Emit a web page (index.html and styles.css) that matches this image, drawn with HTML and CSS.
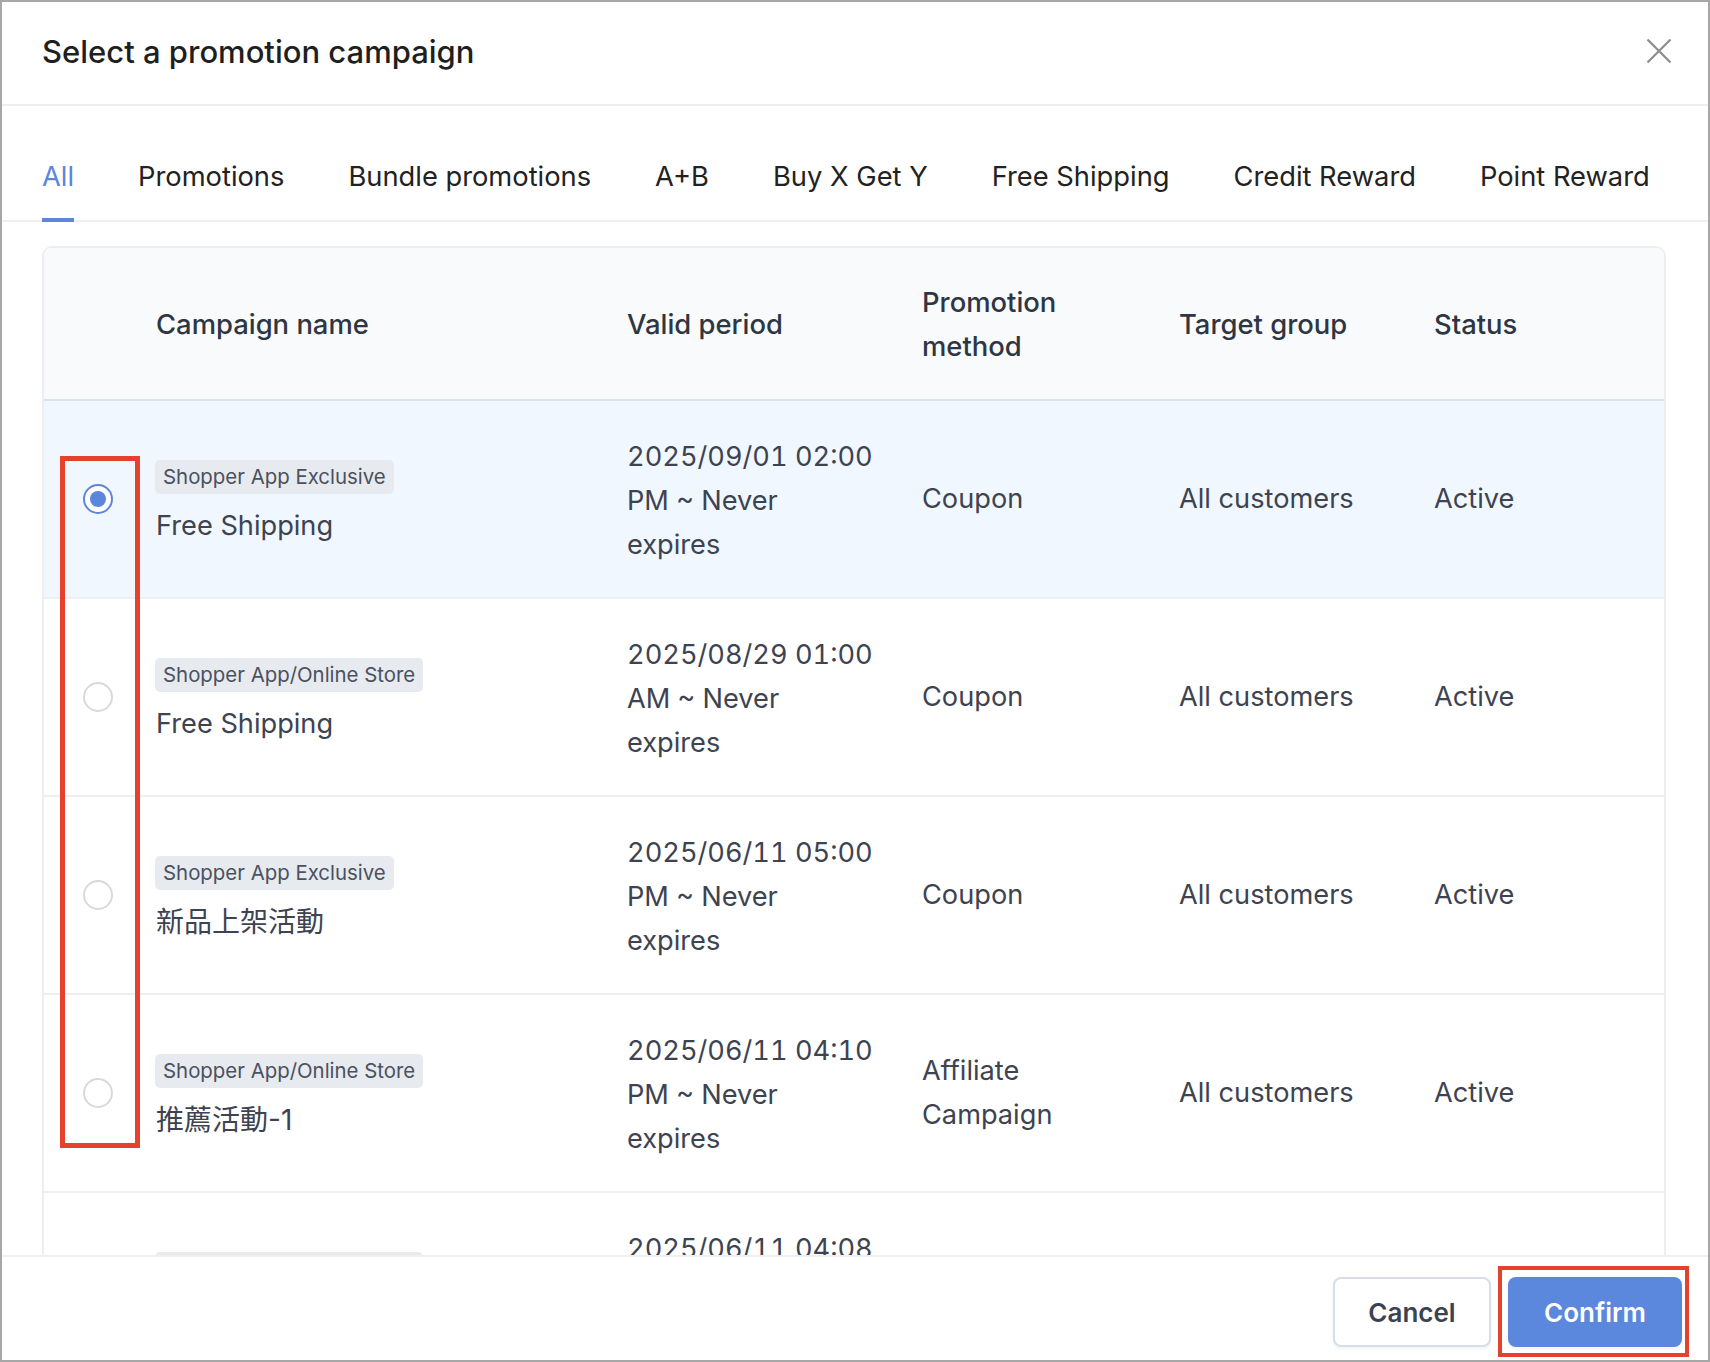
FILE: index.html
```html
<!DOCTYPE html>
<html lang="en">
<head>
<meta charset="utf-8">
<title>Select a promotion campaign</title>
<link rel="stylesheet" href="styles.css">
</head>
<body>
<div class="modal">
  <header class="modal-header">
    <h1 class="modal-title">Select a promotion campaign</h1>
    <button class="close-btn" aria-label="Close">
      <svg width="26" height="26" viewBox="0 0 26 26"><path d="M1.5 1.5 L24.5 24.5 M24.5 1.5 L1.5 24.5" stroke="#8c8c8c" stroke-width="2.2" fill="none"/></svg>
    </button>
  </header>

  <nav class="tabs">
    <span class="tab active">All</span>
    <span class="tab">Promotions</span>
    <span class="tab">Bundle promotions</span>
    <span class="tab">A+B</span>
    <span class="tab">Buy X Get Y</span>
    <span class="tab">Free Shipping</span>
    <span class="tab">Credit Reward</span>
    <span class="tab">Point Reward</span>
  </nav>

  <div class="content">
    <div class="card">
      <div class="row head">
        <div class="cell"></div>
        <div class="cell">Campaign name</div>
        <div class="cell">Valid period</div>
        <div class="cell">Promotion<br>method</div>
        <div class="cell">Target group</div>
        <div class="cell">Status</div>
      </div>

      <div class="row selected">
        <div class="cell radio-cell"><span class="radio checked"></span></div>
        <div class="cell name-cell"><span class="tag">Shopper App Exclusive</span><span class="name">Free Shipping</span></div>
        <div class="cell date">2025/09/01 02:00<br>PM ~ Never<br>expires</div>
        <div class="cell">Coupon</div>
        <div class="cell">All customers</div>
        <div class="cell">Active</div>
      </div>

      <div class="row">
        <div class="cell radio-cell"><span class="radio"></span></div>
        <div class="cell name-cell"><span class="tag">Shopper App/Online Store</span><span class="name">Free Shipping</span></div>
        <div class="cell date">2025/08/29 01:00<br>AM ~ Never<br>expires</div>
        <div class="cell">Coupon</div>
        <div class="cell">All customers</div>
        <div class="cell">Active</div>
      </div>

      <div class="row">
        <div class="cell radio-cell"><span class="radio"></span></div>
        <div class="cell name-cell"><span class="tag">Shopper App Exclusive</span><span class="name cjk">新品上架活動</span></div>
        <div class="cell date">2025/06/11 05:00<br>PM ~ Never<br>expires</div>
        <div class="cell">Coupon</div>
        <div class="cell">All customers</div>
        <div class="cell">Active</div>
      </div>

      <div class="row">
        <div class="cell radio-cell"><span class="radio"></span></div>
        <div class="cell name-cell"><span class="tag">Shopper App/Online Store</span><span class="name cjk">推薦活動-1</span></div>
        <div class="cell date">2025/06/11 04:10<br>PM ~ Never<br>expires</div>
        <div class="cell">Affiliate<br>Campaign</div>
        <div class="cell">All customers</div>
        <div class="cell">Active</div>
      </div>

      <div class="row">
        <div class="cell radio-cell"><span class="radio"></span></div>
        <div class="cell name-cell"><span class="tag">Shopper App/Online Store</span><span class="name">Free Shipping</span></div>
        <div class="cell date">2025/06/11 04:08<br>PM ~ Never<br>expires</div>
        <div class="cell">Coupon</div>
        <div class="cell">All customers</div>
        <div class="cell">Active</div>
      </div>
    </div>
  </div>

  <footer class="modal-footer">
    <button class="btn btn-cancel">Cancel</button>
    <button class="btn btn-confirm">Confirm</button>
  </footer>

  <div class="annot annot-radios"></div>
  <div class="annot annot-confirm"></div>
</div>
</body>
</html>
```

FILE: styles.css
```css
* { box-sizing: border-box; }

html, body {
  margin: 0;
  padding: 0;
  background: #ffffff;
}

body {
  font-family: Inter, "Noto Sans", "Noto Sans CJK TC", sans-serif;
  color: #222;
}

.modal {
  position: relative;
  width: 1710px;
  height: 1362px;
  border: 2px solid #a7a7a7;
  background: #fff;
  display: flex;
  flex-direction: column;
  overflow: hidden;
}

.modal-header {
  height: 104px;
  flex: none;
  display: flex;
  align-items: center;
  justify-content: space-between;
  padding: 0 36px 4px 40px;
  border-bottom: 2px solid #eeeeee;
}

.modal-title {
  margin: 0;
  font-size: 31px;
  font-weight: 500;
  color: #1f1f21;
  letter-spacing: 0;
}

.close-btn {
  background: none;
  border: 0;
  padding: 0;
  width: 26px;
  height: 26px;
  display: flex;
}

.tabs {
  height: 116px;
  flex: none;
  display: flex;
  align-items: flex-end;
  gap: 64px;
  padding-left: 40px;
  border-bottom: 2px solid #f0f0f0;
}

.tab {
  font-size: 27.3px;
  line-height: 36px;
  color: #222;
  padding-bottom: 23px;
  border-bottom: 4px solid transparent;
  margin-bottom: -2px;
}

.tab.active {
  color: #5b86db;
  border-bottom-color: #5b86db;
}

.content {
  flex: 1;
  overflow: hidden;
  padding: 24px 42px 0 40px;
}

.card {
  border: 2px solid #eceef1;
  border-bottom: 0;
  border-radius: 10px 10px 0 0;
  overflow: hidden;
}

.row {
  display: grid;
  grid-template-columns: 112px 471px 295px 257px 255px 1fr;
  align-items: center;
  min-height: 198px;
  border-bottom: 2px solid #efefef;
  font-size: 27.2px;
  line-height: 44px;
  color: #3d4350;
}

.row.head {
  min-height: 153px;
  background: #f9fafc;
  border-bottom: 2px solid #dde3ea;
  color: #2e3643;
  font-weight: 500;
  font-size: 27.4px;
}

.row.selected {
  background: #f0f7ff;
}

.date {
  font-variant-numeric: tabular-nums;
  padding-top: 4px;
}

.radio-cell {
  display: flex;
  align-items: center;
  padding-left: 39px;
}

.radio {
  width: 30px;
  height: 30px;
  border-radius: 50%;
  border: 2px solid #d9d9d9;
  background: #fff;
  display: flex;
  align-items: center;
  justify-content: center;
}

.radio.checked {
  border-color: #5b86db;
}

.radio.checked::after {
  content: "";
  width: 16px;
  height: 16px;
  border-radius: 50%;
  background: #5b86db;
}

.name-cell {
  display: flex;
  flex-direction: column;
  align-items: flex-start;
  padding-top: 10px;
}

.tag {
  display: inline-block;
  font-size: 20.4px;
  line-height: 26px;
  padding: 4px 8px;
  background: #e7eaee;
  color: #4a5160;
  border-radius: 5px;
  margin-left: -1px;
  margin-bottom: 10px;
}

.name {
  font-size: 27.2px;
  line-height: 44px;
  font-family: Inter, "Noto Sans CJK TC", sans-serif;
}

.name.cjk {
  font-size: 28px;
}

.modal-footer {
  flex: none;
  height: 105px;
  border-top: 2px solid #efefef;
  display: flex;
  justify-content: flex-end;
  align-items: flex-start;
  gap: 17px;
  padding: 20px 26px 0 0;
  background: #fff;
}

.btn {
  height: 70px;
  border-radius: 8px;
  font-family: Inter, sans-serif;
  font-size: 26px;
  font-weight: 600;
  box-shadow: 0 2px 4px rgba(0, 0, 0, 0.05);
  cursor: pointer;
}

.btn-cancel {
  width: 158px;
  background: #fff;
  border: 2px solid #d6dee7;
  color: #3b4250;
}

.btn-confirm {
  width: 174px;
  background: #5b87dd;
  border: 0;
  color: #fff;
}

.annot {
  position: absolute;
  border: 5px solid #e5412d;
  pointer-events: none;
}

.annot-radios {
  left: 58px;
  top: 454px;
  width: 80px;
  height: 692px;
}

.annot-confirm {
  left: 1496px;
  top: 1264px;
  width: 191px;
  height: 91px;
  border-width: 4px;
}
```
